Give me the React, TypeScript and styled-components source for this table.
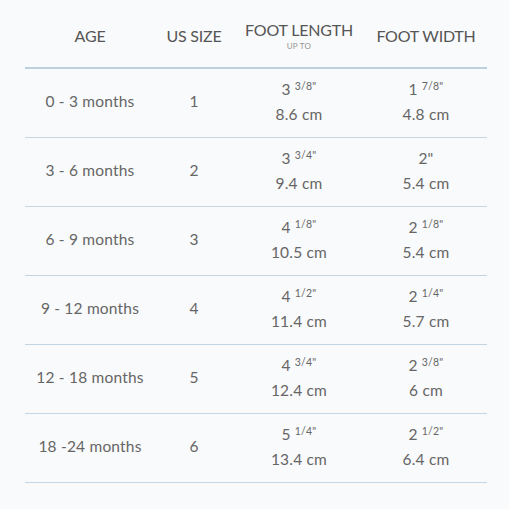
import React from "react";
import styled, { createGlobalStyle } from "styled-components";

const Global = createGlobalStyle`
  html, body { margin: 0; padding: 0; background: #f9fafb; }
  body { font-family: Lato, "Open Sans", sans-serif; }
`;

const Page = styled.div`
  width: 509px;
  height: 509px;
  padding: 14px 22px 0 25px;
  box-sizing: border-box;
  background: #f9fafb;
`;

const Grid = styled.div`
  display: grid;
  grid-template-columns: 130px 78px 132px 122px;
  width: 462px;
`;

const Head = styled.div`
  height: 55px;
  border-bottom: 2px solid #bcd0e0;
  display: flex;
  flex-direction: column;
  align-items: center;
  justify-content: center;
  color: #555;
  font-size: 16px;
  letter-spacing: -0.2px;
  text-transform: uppercase;
  padding-bottom: 10px;
  box-sizing: border-box;
`;

const Sub = styled.span`
  font-size: 8px;
  color: #959595;
  letter-spacing: 0.3px;
  margin-top: 2px;
`;

const Cell = styled.div`
  height: 69px;
  border-bottom: 1px solid #c4d5e3;
  box-sizing: border-box;
  display: flex;
  flex-direction: column;
  align-items: center;
  justify-content: center;
  color: #666;
  font-size: 15.5px;
  line-height: 25px;
  letter-spacing: 0.2px;
  padding-bottom: 3px;
`;

const Frac = styled.sup`
  font-size: 10.5px;
  line-height: 0;
  vertical-align: 0;
  position: relative;
  top: -5px;
  margin-left: 4px;
`;

type Row = { age: string; size: string; len: [string, string, string]; wid: [string, string, string] };

const rows: Row[] = [
  { age: "0 - 3 months", size: "1", len: ["3", "3/8\"", "8.6 cm"], wid: ["1", "7/8\"", "4.8 cm"] },
  { age: "3 - 6 months", size: "2", len: ["3", "3/4\"", "9.4 cm"], wid: ["2\"", "", "5.4 cm"] },
  { age: "6 - 9 months", size: "3", len: ["4", "1/8\"", "10.5 cm"], wid: ["2", "1/8\"", "5.4 cm"] },
  { age: "9 - 12 months", size: "4", len: ["4", "1/2\"", "11.4 cm"], wid: ["2", "1/4\"", "5.7 cm"] },
  { age: "12 - 18 months", size: "5", len: ["4", "3/4\"", "12.4 cm"], wid: ["2", "3/8\"", "6 cm"] },
  { age: "18 -24 months", size: "6", len: ["5", "1/4\"", "13.4 cm"], wid: ["2", "1/2\"", "6.4 cm"] },
];

const Measure = ({ v }: { v: [string, string, string] }) => (
  <Cell>
    <span>
      {v[0]}
      {v[1] && <Frac>{v[1]}</Frac>}
    </span>
    <span>{v[2]}</span>
  </Cell>
);

export default function App() {
  return (
    <>
      <Global />
      <Page>
        <Grid>
          <Head>Age</Head>
          <Head>US Size</Head>
          <Head>
            Foot Length
            <Sub>Up to</Sub>
          </Head>
          <Head>Foot Width</Head>
          {rows.map((r) => (
            <React.Fragment key={r.age}>
              <Cell>{r.age}</Cell>
              <Cell>{r.size}</Cell>
              <Measure v={r.len} />
              <Measure v={r.wid} />
            </React.Fragment>
          ))}
        </Grid>
      </Page>
    </>
  );
}
